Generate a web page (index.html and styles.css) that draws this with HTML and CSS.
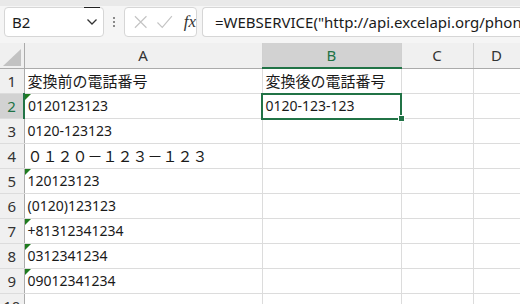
FILE: index.html
```html
<!DOCTYPE html>
<html lang="ja">
<head>
    <meta charset="UTF-8">
    <title>WEBSERVICE 電話番号</title>
    <link rel="stylesheet" href="styles.css">
</head>
<body>
    <div class="topstrip"></div>
    <div class="toolbar">
        <div class="namebox">
            <span>B2</span>
            <svg class="chevron" width="12" height="8" viewBox="0 0 12 8"><path d="M1.5 1.5 L6 6 L10.5 1.5" fill="none" stroke="#333" stroke-width="1.3"/></svg>
        </div>
        <div class="dots"><i></i><i></i><i></i></div>
        <div class="fxbox">
            <svg width="16" height="16" viewBox="0 0 16 16"><path d="M2 2 L14 14 M14 2 L2 14" stroke="#c4c4c4" stroke-width="1.2"/></svg>
            <svg width="18" height="16" viewBox="0 0 18 16"><path d="M1.5 8.5 L6.5 13.5 L16.5 2" fill="none" stroke="#c4c4c4" stroke-width="1.2"/></svg>
            <span class="fx">fx</span>
        </div>
        <div class="formula">=WEBSERVICE("http://api.excelapi.org/phone/hyphen?number="&amp;A2)</div>
    </div>

    <table class="sheet">
        <colgroup>
            <col class="c-row">
            <col class="c-a">
            <col class="c-b">
            <col class="c-c">
            <col class="c-d">
        </colgroup>
        <tr class="head">
            <th class="corner"><svg width="18" height="17" viewBox="0 0 18 17"><path d="M18 0 L18 17 L0 17 Z" fill="#c2c2c2"/></svg></th>
            <th>A</th>
            <th class="active">B</th>
            <th>C</th>
            <th>D</th>
        </tr>
        <tr><th>1</th><td class="ja">変換前の電話番号</td><td class="ja">変換後の電話番号</td><td></td><td></td></tr>
        <tr><th class="active">2</th><td class="flag">0120123123</td><td class="selected">0120-123-123<span class="handle"></span></td><td></td><td></td></tr>
        <tr><th>3</th><td>0120-123123</td><td></td><td></td><td></td></tr>
        <tr><th>4</th><td class="ja">０１２０－１２３－１２３</td><td></td><td></td><td></td></tr>
        <tr><th>5</th><td class="flag">120123123</td><td></td><td></td><td></td></tr>
        <tr><th>6</th><td>(0120)123123</td><td></td><td></td><td></td></tr>
        <tr><th>7</th><td class="flag">+81312341234</td><td></td><td></td><td></td></tr>
        <tr><th>8</th><td class="flag">0312341234</td><td></td><td></td><td></td></tr>
        <tr><th>9</th><td class="flag">09012341234</td><td></td><td></td><td></td></tr>
        <tr><th>10</th><td></td><td></td><td></td><td></td></tr>
    </table>
</body>
</html>
```

FILE: styles.css
```css
:root {
    --green: #217346;
    --grid: #dcdcdc;
    --head-bg: #f0f0f0;
    --head-line: #c6c6c6;
}

* {
    margin: 0;
    padding: 0;
    box-sizing: border-box;
}

body {
    width: 520px;
    height: 304px;
    overflow: hidden;
    background: #fff;
    font-family: "Noto Sans", "Noto Sans CJK JP", sans-serif;
    color: #1a1a1a;
}

.topstrip {
    height: 6px;
    background: #e9e9e9;
}

.toolbar {
    display: flex;
    align-items: center;
    height: 37px;
    padding: 1px 0 6px 4px;
    background: #f5f5f5;
    white-space: nowrap;
    overflow: hidden;
}

.namebox {
    position: relative;
    display: flex;
    align-items: center;
    justify-content: space-between;
    width: 100px;
    height: 30px;
    padding: 0 5px 0 7px;
    background: #fff;
    border: 1px solid #d6d6d6;
    border-radius: 4px;
    font-size: 15px;
}

.namebox::after {
    content: "";
    position: absolute;
    top: -1px;
    right: 3px;
    width: 16px;
    height: 1px;
    background: #222;
}

.dots {
    display: flex;
    flex-direction: column;
    gap: 2px;
    margin: 0 9px 0 9px;
}

.dots i {
    display: block;
    width: 2px;
    height: 2px;
    background: #8a8a8a;
}

.fxbox {
    display: flex;
    align-items: center;
    gap: 8px;
    width: 73px;
    height: 30px;
    padding-left: 8px;
    background: #fff;
    border: 1px solid #d6d6d6;
    border-radius: 4px;
}

.fx {
    font-family: "Liberation Serif", serif;
    font-style: italic;
    font-size: 17px;
    color: #333;
    margin-left: 2px;
}

.formula {
    flex: 1;
    min-width: 0;
    height: 30px;
    margin-left: 5px;
    padding: 4px 0 0 12px;
    background: #fff;
    border: 1px solid #d6d6d6;
    border-right: none;
    border-radius: 4px 0 0 4px;
    font-size: 15px;
    overflow: hidden;
}

.sheet {
    border-collapse: collapse;
    table-layout: fixed;
    width: 520px;
    font-size: 14px;
}

.c-row { width: 24px; }
.c-a { width: 238px; }
.c-b { width: 139px; }
.c-c { width: 72px; }
.c-d { width: 47px; }

.sheet th {
    height: 25px;
    background: var(--head-bg);
    font-weight: normal;
    font-size: 15px;
    color: #333;
    border-right: 1px solid var(--head-line);
    border-bottom: 1px solid var(--grid);
    text-align: center;
    font-family: "Noto Sans", sans-serif;
}

.sheet tr:first-child th {
    border-bottom: 1px solid #ababab;
    border-right: 1px solid #d0d0d0;
}

.sheet tr th:first-child {
    border-right: 1px solid #ababab;
}

.sheet th.corner {
    position: relative;
    vertical-align: bottom;
    text-align: right;
    padding: 0 3px 2px 0;
}

.corner svg {
    display: block;
    margin-left: auto;
}

.sheet th.active {
    background: #d2d2d2;
    color: var(--green);
}

.sheet tr:first-child th.active {
    border-bottom: 2px solid var(--green);
}

.sheet tr th.active:first-child {
    border-right: 2px solid var(--green);
}

.sheet td {
    position: relative;
    height: 25px;
    padding: 0 0 0 3px;
    line-height: 24px;
    border-right: 1px solid var(--grid);
    border-bottom: 1px solid var(--grid);
    white-space: nowrap;
    overflow: visible;
}

.sheet td.ja {
    font-size: 15px;
}

.flag::before {
    content: "";
    position: absolute;
    top: 0;
    left: 0;
    border-top: 6px solid #1e7b1e;
    border-right: 6px solid transparent;
}

.sheet td.selected {
    outline: 2px solid var(--green);
    outline-offset: -1px;
}

.handle {
    position: absolute;
    right: -4px;
    bottom: -4px;
    width: 7px;
    height: 7px;
    background: var(--green);
    border: 1px solid #fff;
}
```
